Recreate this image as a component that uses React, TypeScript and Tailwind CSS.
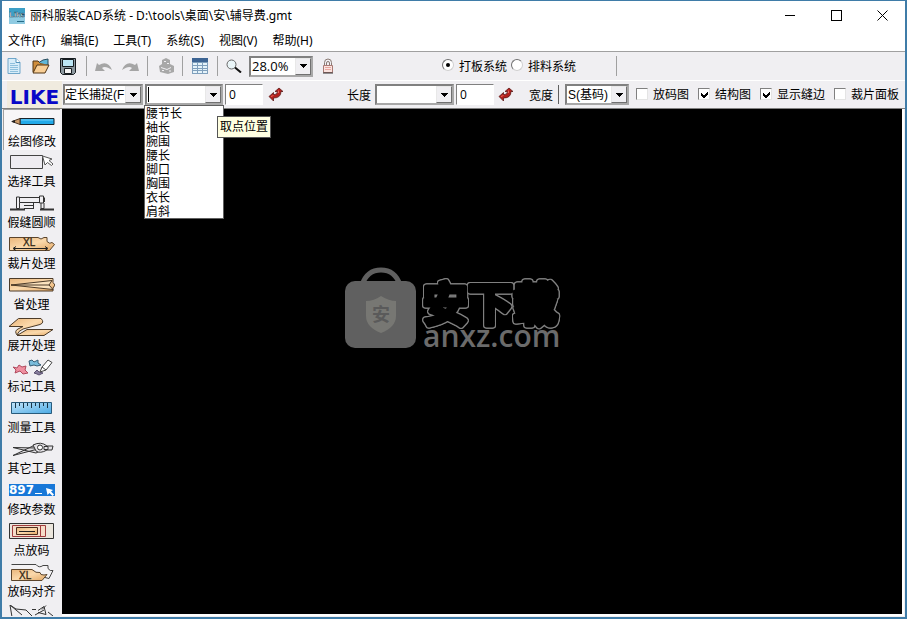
import type { ReactNode } from "react";

const menus = ["文件(F)", "编辑(E)", "工具(T)", "系统(S)", "视图(V)", "帮助(H)"];
const measures = ["腰节长", "袖长", "腕围", "腰长", "脚口", "胸围", "衣长", "肩斜"];

const sunken = "border border-t-[#808080] border-l-[#808080] border-r-white border-b-white bg-white";
const comboFrame = "h-[21px] shrink-0 border-2 border-[#808080] border-r-[#a8a8a8] border-b-[#a8a8a8] bg-white";
const arrowFrame =
  "flex w-4 shrink-0 items-center justify-center border border-t-[#e8e8e8] border-l-[#e8e8e8] border-r-[#707070] border-b-[#707070] bg-[#f0eff2]";

function Divider() {
  return <span className="h-5 w-px shrink-0 bg-[#a0a0a0]" />;
}

function Arrow() {
  return (
    <svg viewBox="0 0 7 4" className="h-1 w-[7px]" shapeRendering="crispEdges">
      <path d="M0 0h7v1h-1v1h-1v1h-1v1h-1v-1h-1v-1h-1v-1h-1z" fill="#000" />
    </svg>
  );
}

function Select({ label, value, className }: { label: string; value: string; className: string }) {
  return (
    <span className={`relative block ${comboFrame} ${className}`}>
      <select aria-label={label} className="block h-full w-full appearance-none truncate pr-4 leading-4 text-clip outline-none">
        <option>{value}</option>
      </select>
      <span className={`pointer-events-none absolute inset-y-0 right-0 ${arrowFrame}`}>
        <Arrow />
      </span>
    </span>
  );
}

function Combo({ label, className, caret }: { label: string; className: string; caret?: boolean }) {
  return (
    <span className={`flex items-center ${comboFrame} ${className}`}>
      {caret && <span className="ml-px h-[15px] w-px shrink-0 bg-black" />}
      <input aria-label={label} className="w-full min-w-0 outline-none" />
      <button aria-label={`${label}列表`} className={`h-full ${arrowFrame}`}>
        <Arrow />
      </button>
    </span>
  );
}

function NumberBox({ label }: { label: string }) {
  return (
    <input
      aria-label={label}
      defaultValue="0"
      className={`h-[21px] w-[38px] shrink-0 px-[3px] font-['Open_Sans',sans-serif] outline-none ${sunken}`}
    />
  );
}

function EnterButton({ label }: { label: string }) {
  return (
    <button aria-label={label} className="flex h-5 w-[18px] shrink-0 items-center justify-center">
      <svg viewBox="0 0 16 16" className="size-4">
        <path d="M1 9.500 5.500 5.500v2.300q4 0 4-3.300L7 4.500 11 1l4 3.500-2 0q0 6.500-7.500 6.500v3z" fill="#b3201c" stroke="#5a1c1a" strokeWidth=".8" />
        <path d="M10.500 3.500v2.500M3 9.500l2.500-1" stroke="#e9655b" fill="none" />
      </svg>
    </button>
  );
}

function Check({ label, checked }: { label: string; checked?: boolean }) {
  return (
    <label className="flex shrink-0 items-center gap-[5px]">
      <span className="relative mb-0.5 flex size-3">
        <input
          type="checkbox"
          defaultChecked={checked}
          className="peer size-3 appearance-none border border-t-[#808080] border-r-[#e4e4e4] border-b-[#e4e4e4] border-l-[#808080] bg-white"
        />
        <svg viewBox="0 0 7 7" className="pointer-events-none absolute top-[3px] left-[3px] hidden size-[7px] peer-checked:block" shapeRendering="crispEdges">
          <path d="M0 2v3l2 2h1l4-4V0L3 4h-1z" fill="#000" />
        </svg>
      </span>
      {label}
    </label>
  );
}

function Radio({ label, checked }: { label: string; checked?: boolean }) {
  return (
    <label className="flex items-center gap-[5px]">
      <span className="relative mb-1 flex size-3">
        <input
          type="radio"
          name="mode"
          defaultChecked={checked}
          className="peer size-3 appearance-none rounded-full border border-t-[#707070] border-r-[#d0d0d0] border-b-[#d0d0d0] border-l-[#707070] bg-white"
        />
        <span className="pointer-events-none absolute inset-1 hidden rounded-full bg-black peer-checked:block" />
      </span>
      {label}
    </label>
  );
}

function IconButton({ label, className = "", children }: { label: string; className?: string; children: ReactNode }) {
  return (
    <button aria-label={label} className={`flex h-5 shrink-0 items-center justify-center ${className}`}>
      {children}
    </button>
  );
}

const wood = "url(#wood)";

const tools: { name: string; icon: ReactNode }[] = [
  {
    name: "绘图修改",
    icon: (
      <>
        <path d="M11 4.500h34v6H11z" fill="#22a9e8" stroke="#17232c" />
        <path d="M12 6h32" stroke="#73d1fb" />
        <path d="M11 4.500 3 7.500l8 3z" fill="#c99a6a" stroke="#4b3524" />
        <path d="M2 7.500 6 6v3z" fill="#222" />
      </>
    ),
  },
  {
    name: "选择工具",
    icon: (
      <>
        <path d="M1.500 1.500h32v13h-32z" fill="#eeecf1" stroke="#444" />
        <path d="m33.500 2 2.500 9 2.500-2.500 4 3 1.500-1.500-4-3.500 3-1.500z" fill="#fff" stroke="#555" />
      </>
    ),
  },
  {
    name: "假缝圆顺",
    icon: (
      <g stroke="#333" fill="none">
        <path d="M1 14.500h15M31 14.500h14" strokeWidth="2" />
        <path d="M7.500 2v11.500h3V7.500h20v-5h-20M7.500 2h3v5.500M30.500 1v7h4V1zM35.500 2.500V7M32 8v5.500h3V8M24.500 13.500v-6M15 13.500h10M15 10.500h9" />
      </g>
    ),
  },
  {
    name: "裁片处理",
    icon: (
      <>
        <path d="M.5 1.500H29q3 3 6 0h3v4q3 3 5 1l2.500 2-5 6H.5z" fill={wood} stroke="#5b442b" />
        <path d="M5 12.500h33M7 10.500l-3 2 3 2M36 10.500l3 2-3 2" fill="none" stroke="#222" />
        <text x="14" y="10" fontSize="10" fontFamily="Liberation Sans, sans-serif" fill="#332715" stroke="#332715" strokeWidth=".3">XL</text>
      </>
    ),
  },
  {
    name: "省处理",
    icon: (
      <g stroke="#4c3b29">
        <path d="M.5 1.500H44v4l2 2.500-2 3v3H.5z" fill={wood} />
        <path d="M43 3.500 2 8l42 4.500-4-4.500z" fill="#fbe2bd" />
        <path d="M2 8h38" />
      </g>
    ),
  },
  {
    name: "展开处理",
    icon: (
      <g stroke="#4c3b29" fill={wood}>
        <path d="M8 17.500 18 11.500h26l-9 6z" />
        <path d="M0 8.500 9.500.5H32q4 4-1 6L14 11q-5 2-6 6-3-4 1-6l5-2.500z" />
      </g>
    ),
  },
  {
    name: "标记工具",
    icon: (
      <>
        <path d="m4 8 4 1 2-3 3 2 4-1-1 4 3 3-5 1-3-3-5 2 1-3z" fill="#ef8fa0" stroke="#b04a5e" />
        <path d="m20 2 3-1 2 2 4-2v3l3 2-4 1-3-1-4 1z" fill="#79bcdb" stroke="#355d75" />
        <path d="m25 14 3-3 2 2 4 1-4 2-2-1z" fill="#867d9c" stroke="#5a506f" />
        <path d="m31 13 2-5 6-7 4 2.500-6 7.500zM33 8l4 3" fill="#fff" stroke="#444" />
      </>
    ),
  },
  {
    name: "测量工具",
    icon: (
      <>
        <path d="M2.500 2.500h40v11h-40z" fill="url(#water)" stroke="#285b7c" />
        <path d="M6.500 3v5M10.500 3v3M14.500 3v5M18.500 3v3M22.500 3v5M26.500 3v3M30.500 3v5M34.500 3v3M38.500 3v5" stroke="#1b3547" />
      </>
    ),
  },
  {
    name: "其它工具",
    icon: (
      <g stroke="#333" fill="#e4e2e6">
        <path d="M4 6.500 27 7l4 3-4 2zM4 14.500 26 4l5 0-2 4z" />
        <path d="M24 4q8-4 14 1h6l-1 4h-5q-7 4-11 1z" />
        <circle cx="31" cy="6.500" r="2.500" fill="#fff" />
        <path d="M35 5.500h4v3h-4z" />
      </g>
    ),
  },
  {
    name: "修改参数",
    icon: (
      <>
        <path d="M0 2h46v12H0z" fill="#1878d8" />
        <text x="0" y="12" fontSize="12" fontWeight="bold" fontFamily="DejaVu Sans, sans-serif" fill="#fff">897</text>
        <path d="M26 11.500h7" stroke="#fff" />
        <path d="m37 6 1.500 7 2-2 3 3 1.500-1.500-3-3 2-1.500z" fill="#fff" />
      </>
    ),
  },
  {
    name: "点放码",
    icon: (
      <>
        <path d="M.5.500h44v15H.5z" fill="#ece6dd" stroke="#333" />
        <path d="M3.500 2.500h33v11h-33z" fill="#f6dcc8" stroke="#a03b3d" />
        <path d="M7.500 4.500h21v7h-21z" fill={wood} stroke="#4d2d1d" />
        <path d="M10 8.500h16" stroke="#222" />
        <path d="M31.500 3v10" stroke="#a03b3d" />
      </>
    ),
  },
  {
    name: "放码对齐",
    icon: (
      <>
        <path d="M2.500.5H27q3 4 7 1h5v3q2 3 5 2l-4 8-4-1" fill="#f4f2f4" stroke="#444" />
        <path d="M2.500 5.500H23q4 4 8 3l1 2q3 1 6 0l-5 6H2.500z" fill={wood} stroke="#5b442b" />
        <text x="10" y="15" fontSize="10" fontFamily="Liberation Sans, sans-serif" fill="#332715" stroke="#332715" strokeWidth=".3">XL</text>
      </>
    ),
  },
];

function Toolbar() {
  return (
    <div className="flex h-[29px] items-center border-t border-[#a0a0a0] pl-1">
      <IconButton label="新建" className="w-4">
        <svg viewBox="0 0 14 16" className="h-4 w-3.5">
          <path d="M1 .5h8l4 4v11H1z" fill="#d8edf9" stroke="#6fa6ca" />
          <path d="M9 .5v4h4" fill="#fff" stroke="#5595bd" />
          <path d="M3 5.500h5M3 7.500h8M3 9.500h8M3 11.500h8M3 13.500h8" stroke="#8fc0dd" />
        </svg>
      </IconButton>
      <IconButton label="打开" className="ml-2.5 w-[18px]">
        <svg viewBox="0 0 18 16" className="h-4 w-[18px]">
          <path d="M1 14V3h5l2 2h7v3" fill="#cf8d3b" stroke="#513414" />
          <path d="M7 4.500 11 2l5-1v6" fill="#60b7d8" stroke="#294c5d" />
          <path d="m1 15 4-8h12l-4 8z" fill="#f9cf96" stroke="#513414" />
        </svg>
      </IconButton>
      <IconButton label="保存" className="ml-2.5 w-4">
        <svg viewBox="0 0 16 18" className="h-[18px] w-4">
          <path d="M.5 1.500h15v14l-2 2h-11l-2-2z" fill="#8b979e" stroke="#161c20" />
          <path d="M2.500 2.500h11v7h-11z" fill="#bce6f5" stroke="#161c20" />
          <path d="M4.500 11.500h7v5h-7z" fill="#f4f4f4" stroke="#161c20" />
        </svg>
      </IconButton>
      <span className="w-2.5" />
      <Divider />
      <IconButton label="撤销" className="ml-2 w-[18px]">
        <svg viewBox="0 0 18 12" className="h-3 w-[18px]">
          <path d="m0 11 2-8 2 2q9-5 13 5-7-5-10-2l3 3z" fill="#a5a5a5" />
        </svg>
      </IconButton>
      <IconButton label="重做" className="ml-2 w-[18px]">
        <svg viewBox="0 0 18 12" className="h-3 w-[18px]">
          <path d="m18 11-2-8-2 2Q5 0 1 10q7-5 10-2l-3 3z" fill="#a5a5a5" />
        </svg>
      </IconButton>
      <span className="w-2" />
      <Divider />
      <IconButton label="打印" className="ml-2.5 w-4">
        <svg viewBox="0 0 16 16" className="size-4">
          <path d="m4 2 4-2 4 2v4l4 2v6l-6 2-8-2-1-6 3-2z" fill="#a8a8a8" />
          <path d="M6 3.500h2M9 5.500h2M3 9.500l6 2 4-2M4 12.500h2M11 13h2" stroke="#f0eff2" fill="none" />
        </svg>
      </IconButton>
      <span className="w-2" />
      <Divider />
      <IconButton label="表格" className="ml-2 w-[18px]">
        <svg viewBox="0 0 16 16" className="size-4" shapeRendering="crispEdges">
          <path d="M0 0h16v16H0z" fill="#7f9fbc" />
          <path d="M0 0h16v4H0z" fill="#3d6493" />
          <path d="M1 5h4v2H1zM6 5h4v2H6zM11 5h4v2h-4zM1 8h4v2H1zM6 8h4v2H6zM11 8h4v2h-4zM1 11h4v1H1zM6 11h4v1H6zM11 11h4v1h-4zM1 13h4v2H1zM6 13h4v2H6zM11 13h4v2h-4z" fill="#e5f3fa" />
        </svg>
      </IconButton>
      <span className="w-2" />
      <Divider />
      <IconButton label="缩放" className="ml-2 w-4">
        <svg viewBox="0 0 16 14" className="h-3.5 w-4">
          <circle cx="5.500" cy="5.500" r="4.500" fill="#eaf5f8" stroke="#666" />
          <path d="m9 8.500 6 5" stroke="#111" strokeWidth="2" />
        </svg>
      </IconButton>
      <Select label="显示比例" value="28.0%" className="ml-[7px] w-[64px] pl-px font-['Open_Sans',sans-serif] text-[13px]" />
      <IconButton label="锁定" className="ml-2 w-3.5">
        <svg viewBox="0 0 12 16" className="h-4 w-3">
          <path d="M2.500 8V4.500q0-3.500 3.500-3.500t3.500 3.500V8M4.500 8V5q0-1.500 1.500-1.500T7.500 5v3" fill="none" stroke="#8a7a74" />
          <path d="M1.500 7.500h9v7h-9z" fill="#fbe3df" stroke="#a97a74" />
          <path d="M3 9.500h6M3 11.500h6" stroke="#e8a8a0" />
          <path d="M1 15h10" stroke="#333" />
        </svg>
      </IconButton>
      <fieldset className="ml-[107px] flex items-center gap-1 pt-0.5">
        <Radio label="打板系统" checked />
        <Radio label="排料系统" />
      </fieldset>
      <span className="w-10" />
      <Divider />
    </div>
  );
}

function OptionBar() {
  return (
    <div className="flex h-[29px] items-center border-t border-white border-b border-b-[#808080] pl-[5px]">
      <div className="flex h-full w-[55px] shrink-0 items-center justify-center bg-[#f0ebdf] pt-1">
        <span className="font-['DejaVu_Sans',sans-serif] text-[20px] leading-5 font-bold text-[#0808c8]">LIKE</span>
      </div>
      <Select label="捕捉方式" value="定长捕捉(F" className="ml-px w-[80px]" />
      <div className="relative ml-[2px] shrink-0">
        <Combo label="取点位置" className="w-[78px]" caret />
        <ul
          role="listbox"
          aria-label="取点位置"
          className="absolute top-[21px] -left-px z-10 h-[114px] w-[80px] overflow-hidden border border-[#606060] bg-white pt-px pl-px leading-[14px]"
        >
          {measures.map((m) => (
            <li key={m} role="option" aria-selected="false">
              {m}
            </li>
          ))}
        </ul>
        <span
          role="tooltip"
          className="absolute top-[32px] left-[72px] z-20 border border-[#555] bg-[#ffffe1] px-0.5 py-px leading-[18px] whitespace-nowrap"
        >
          取点位置
        </span>
      </div>
      <span className="ml-[2px] flex">
        <NumberBox label="取点偏移" />
      </span>
      <span className="ml-1 flex">
        <EnterButton label="确认取点" />
      </span>
      <span className="ml-[62px] shrink-0 pt-0.5">长度</span>
      <span className="ml-1 flex">
        <Combo label="长度" className="w-[79px]" />
      </span>
      <span className="ml-[2px] flex">
        <NumberBox label="长度偏移" />
      </span>
      <span className="ml-[3px] flex">
        <EnterButton label="确认长度" />
      </span>
      <span className="ml-3.5 shrink-0 pt-0.5">宽度</span>
      <span className="ml-[5px] h-[19px] w-px shrink-0 bg-[#606060]" />
      <Select label="尺码" value="S(基码)" className="ml-[6px] w-[64px] pl-px" />
      <div className="ml-[7px] flex gap-[9px]">
        <Check label="放码图" />
        <Check label="结构图" checked />
        <Check label="显示缝边" checked />
        <Check label="裁片面板" />
      </div>
    </div>
  );
}

function Watermark() {
  return (
    <div className="absolute top-[158px] left-[283px] flex items-start gap-0.5">
      <svg viewBox="0 0 72 82" className="h-[82px] w-[72px] shrink-0">
        <path d="M17 18q5-15 19-15t19 15" fill="none" stroke="#606060" strokeWidth="5" />
        <rect x="0" y="14" width="71" height="67" rx="10" fill="#606060" />
        <path d="M36 29q8 5 15 5v15q0 11-15 17-15-6-15-17V34q8 0 15-5z" fill="#777773" />
        <text x="27" y="54" fontSize="18" fontWeight="bold" fontFamily="Noto Sans CJK SC, sans-serif" fill="#5a5a5a">安</text>
      </svg>
      <svg viewBox="0 0 144 82" className="h-[82px] w-36 shrink-0">
        <text
          x="4"
          y="54"
          fontSize="45"
          fontWeight="bold"
          fontFamily="Noto Sans CJK SC, sans-serif"
          stroke="#000"
          strokeWidth="5"
          strokeLinejoin="round"
          className="[filter:drop-shadow(1px_0_0_#808080)_drop-shadow(-1px_0_0_#808080)_drop-shadow(0_1px_0_#808080)_drop-shadow(0_-1px_0_#808080)]"
        >
          安下载
        </text>
        <text x="4" y="80" fontSize="30" fontWeight="600" fontFamily="Open Sans, sans-serif" fill="#6b6b6b">anxz.com</text>
      </svg>
    </div>
  );
}

export default function App() {
  return (
    <div className="flex h-screen flex-col overflow-hidden border-2 border-t border-[#3f7ca8] bg-[#f0eff2] font-['Liberation_Sans','Noto_Sans_CJK_SC',sans-serif] text-xs text-black">
      <header className="bg-white">
        <div className="flex h-[29px] items-center pl-[7px]">
          <svg viewBox="0 0 16 16" className="size-4">
            <path d="M0 0h16v16H0z" fill="#8fcbe2" />
            <path d="M0 0h16v9H0z" fill="#3d9fc6" />
            <path d="M8 13.500h7" stroke="#276b87" />
            <text x="0" y="9" fontSize="8" fontWeight="bold" fontFamily="Liberation Sans, sans-serif" fill="#fff" stroke="#1d4c63" strokeWidth=".4">Like</text>
          </svg>
          <h1 className="ml-[5px] font-['Noto_Sans','Noto_Sans_CJK_SC',sans-serif] text-xs">丽科服装CAD系统 - D:\tools\桌面\安\辅导费.gmt</h1>
          <div className="ml-auto flex items-center">
            <button aria-label="最小化" className="flex h-7 w-[46px] items-center justify-center">
              <span className="h-px w-2.5 bg-black" />
            </button>
            <button aria-label="最大化" className="flex h-7 w-[46px] items-center justify-center">
              <span className="size-[11px] border border-black" />
            </button>
            <button aria-label="关闭" className="flex h-7 w-[46px] items-center justify-center">
              <svg viewBox="0 0 11 11" className="size-[11px]">
                <path d="m.5.5 10 10m0-10-10 10" stroke="#000" />
              </svg>
            </button>
          </div>
        </div>
        <nav className="flex h-[21px] items-center gap-[15px] pl-[6px] font-['Noto_Sans','Noto_Sans_CJK_SC',sans-serif]">
          {menus.map((m) => (
            <button key={m} className="whitespace-nowrap">
              {m}
            </button>
          ))}
        </nav>
      </header>
      <Toolbar />
      <OptionBar />
      <div className="flex min-h-0 flex-1 pr-px pb-px">
        <svg className="absolute size-0" aria-hidden="true">
          <linearGradient id="wood" x1="0" y1="0" x2="1" y2="1">
            <stop offset="0" stopColor="#e9b57a" />
            <stop offset=".5" stopColor="#fbd9ac" />
            <stop offset="1" stopColor="#e3a763" />
          </linearGradient>
          <linearGradient id="water" x1="0" y1="0" x2="1" y2="1">
            <stop offset="0" stopColor="#c4e6fb" />
            <stop offset="1" stopColor="#4aa9e4" />
          </linearGradient>
        </svg>
        <aside className="w-[60px] shrink-0 overflow-hidden pr-0.5 pl-px">
          {tools.map((tool, i) => (
            <button
              key={tool.name}
              className={`flex h-[41px] w-full flex-col items-center pt-1 ${i === 0 ? "border-t border-l border-[#a0a0a0] bg-[#f7f6f8]" : ""}`}
            >
              <svg viewBox="0 0 46 18" className="h-[18px] w-[46px] shrink-0">
                {tool.icon}
              </svg>
              <span className="leading-[20px]">{tool.name}</span>
            </button>
          ))}
          <button aria-label="放码规则" className="flex h-[41px] w-full justify-center pt-1">
            <svg viewBox="0 0 46 18" className="h-[18px] w-[46px]">
              <path d="M3 12 1 0l6 4 10 1 6 6M1 0l12 10M23 4.500h4M29 5.500l6-4 2 8-8-2M33 4.500l4-4M39 7l5 4M26 10l9-5" fill="none" stroke="#333" />
            </svg>
          </button>
        </aside>
        <main className="relative flex-1 border-r-2 border-b-2 border-white bg-black">
          <Watermark />
        </main>
      </div>
    </div>
  );
}
